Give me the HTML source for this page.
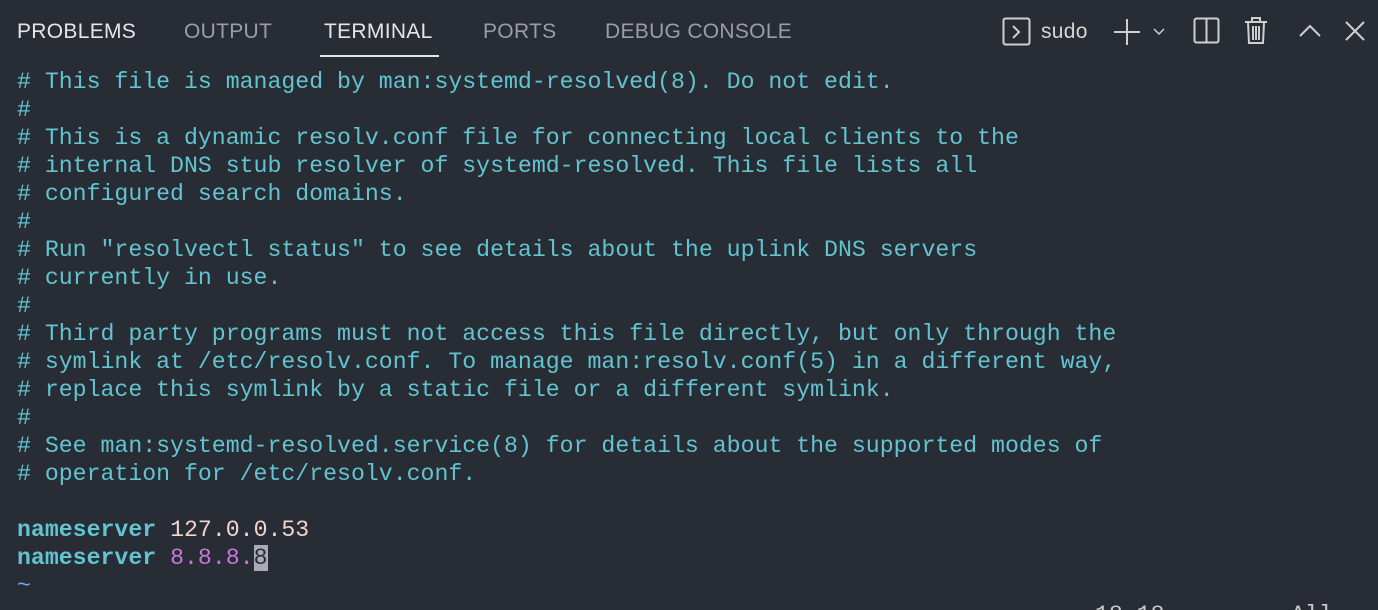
<!DOCTYPE html>
<html><head><meta charset="utf-8"><style>
html,body{margin:0;padding:0;background:#282c34;width:1378px;height:610px;overflow:hidden;position:relative}
.tab{position:absolute;top:20px;font:21px "Liberation Sans",sans-serif;color:#9a9da3;white-space:nowrap;letter-spacing:0.3px}
.w{color:#e6e6e6}
.ul{position:absolute;left:320px;top:55px;width:119px;height:2px;background:#e6e6e6}
pre{position:absolute;left:17px;top:68px;margin:0;font:23.2px/28px "Liberation Mono",monospace;color:#62c4d0}
.b{font-weight:bold}
.p{color:#f3d4cc}
.m{color:#c678dd}
.cur{background:#a9adb3;color:#282c34}
.t{color:#61afef}
.st{position:absolute;top:601px;font:23.2px/28px "Liberation Mono",monospace;color:#c8c8c8}
svg{position:absolute}
</style></head><body>
<div class="tab w" style="left:17px">PROBLEMS</div>
<div class="tab" style="left:184px">OUTPUT</div>
<div class="tab w" style="left:324px">TERMINAL</div>
<div class="tab" style="left:483px">PORTS</div>
<div class="tab" style="left:605px">DEBUG CONSOLE</div>
<div class="ul"></div>
<svg style="left:1002px;top:17px" width="30" height="30" viewBox="0 0 30 30" fill="none" stroke="#cfcfcf" stroke-width="2"><rect x="1.5" y="1.5" width="26" height="26" rx="2"/><path d="M11 9l6 6-6 6"/></svg>
<div class="tab w" style="left:1041px;color:#d6d6d6">sudo</div>
<svg style="left:1113px;top:17px" width="60" height="30" viewBox="0 0 60 30" fill="none" stroke="#cfcfcf" stroke-width="2"><path d="M14 2v26M1 15h26"/><path d="M41 12l5 5 5-5" stroke-width="1.5"/></svg>
<svg style="left:1193px;top:17px" width="28" height="28" viewBox="0 0 28 28" fill="none" stroke="#cfcfcf" stroke-width="2"><rect x="1.5" y="1.5" width="24" height="24" rx="2"/><path d="M13.5 2v24"/></svg>
<svg style="left:1244px;top:16px" width="26" height="30" viewBox="0 0 26 30" fill="none" stroke="#cfcfcf" stroke-width="2"><path d="M1 6h22M8 6V2h8v4M4 6l1 21h14l1-21M9 10v14M12 10v14M15 10v14"/></svg>
<svg style="left:1298px;top:20px" width="24" height="20" viewBox="0 0 24 20" fill="none" stroke="#cfcfcf" stroke-width="2"><path d="M2 16l10-10 10 10"/></svg>
<svg style="left:1344px;top:20px" width="22" height="22" viewBox="0 0 22 22" fill="none" stroke="#cfcfcf" stroke-width="2"><path d="M2 2l18 18M20 2L2 20"/></svg>
<pre># This file is managed by man:systemd-resolved(8). Do not edit.
#
# This is a dynamic resolv.conf file for connecting local clients to the
# internal DNS stub resolver of systemd-resolved. This file lists all
# configured search domains.
#
# Run "resolvectl status" to see details about the uplink DNS servers
# currently in use.
#
# Third party programs must not access this file directly, but only through the
# symlink at /etc/resolv.conf. To manage man:resolv.conf(5) in a different way,
# replace this symlink by a static file or a different symlink.
#
# See man:systemd-resolved.service(8) for details about the supported modes of
# operation for /etc/resolv.conf.

<span class="b">nameserver</span> <span class="p">127.0.0.53</span>
<span class="b">nameserver</span> <span class="m">8.8.8.</span><span class="cur">8</span>
<span class="t">~</span></pre>
<div class="st" style="left:1095px">18,18</div>
<div class="st" style="left:1291px">All</div>
</body></html>
